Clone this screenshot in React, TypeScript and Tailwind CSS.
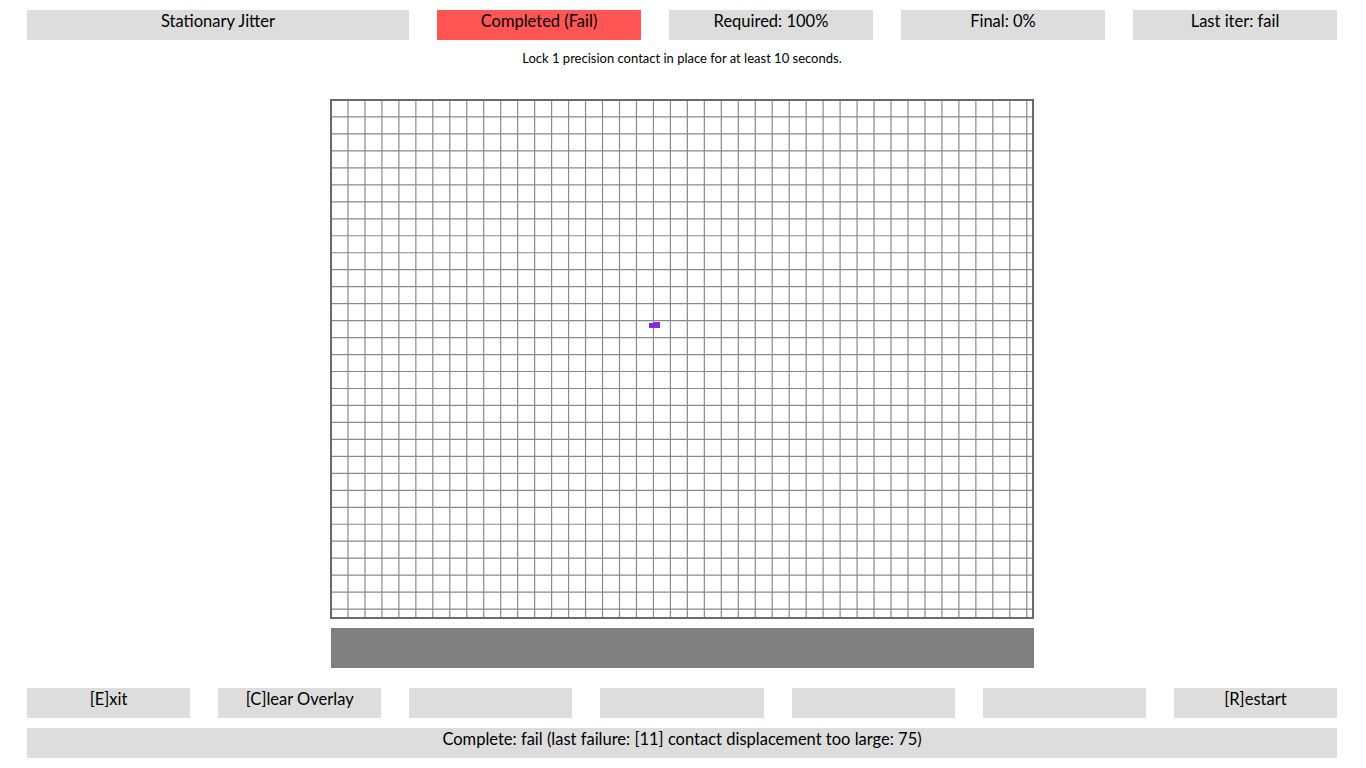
import React from 'react';

const PITCH = 16.97;
const GRID_W = 703;
const GRID_H = 519;

const Cell: React.FC<{ label?: string; className?: string }> = ({ label, className }) => (
  <div className={`h-[30px] flex justify-center bg-[#dddddd] text-[16.5px] leading-[23px] text-black ${className ?? ''}`}>
    {label}
  </div>
);

const Grid: React.FC = () => {
  const cols = Math.floor(GRID_W / PITCH);
  const rows = Math.floor(GRID_H / PITCH);
  return (
    <svg width={GRID_W + 1} height={GRID_H + 1} className="block">
      {Array.from({ length: cols + 1 }, (_, i) => (
        <line key={`v${i}`} x1={1 + i * PITCH} y1={0} x2={1 + i * PITCH} y2={GRID_H} stroke="#8a8a8a" strokeWidth={1.2} />
      ))}
      {Array.from({ length: rows + 1 }, (_, j) => (
        <line key={`h${j}`} x1={0} y1={1 + j * PITCH} x2={GRID_W} y2={1 + j * PITCH} stroke="#8a8a8a" strokeWidth={1.2} />
      ))}
      <rect x={1} y={1} width={GRID_W - 1} height={GRID_H - 1} fill="none" stroke="#6a6a6a" strokeWidth={2} />
      {/* contact marker */}
      <rect x={319} y={224} width={11} height={5} fill="#8a2be2" />
      <rect x={324} y={223} width={6} height={1} fill="#8a2be2" />
    </svg>
  );
};

export default function App() {
  return (
    <div className="w-[1366px] h-[768px] bg-white pl-[27px] pr-[29px] pt-[10px] font-['Lato','Open_Sans',sans-serif]">
      {/* header row */}
      <div className="flex gap-[28px]">
        <Cell label="Stationary Jitter" className="w-[382px]" />
        <Cell label="Completed (Fail)" className="w-[204px] !bg-[#ff5555]" />
        <Cell label="Required: 100%" className="w-[204px]" />
        <Cell label="Final: 0%" className="w-[204px]" />
        <Cell label="Last iter: fail" className="w-[204px]" />
      </div>

      <div className="mt-[10px] h-[16px] text-center text-[13px] leading-[16px] text-black">
        Lock 1 precision contact in place for at least 10 seconds.
      </div>

      <div className="mt-[33px] flex flex-col items-center">
        <Grid />
        <div className="mt-[9px] h-[40px] w-[703px] bg-[#808080]" />
      </div>

      {/* controls */}
      <div className="mt-[20px] flex gap-[28px]">
        <Cell label="[E]xit" className="flex-1" />
        <Cell label="[C]lear Overlay" className="flex-1" />
        <Cell className="flex-1" />
        <Cell className="flex-1" />
        <Cell className="flex-1" />
        <Cell className="flex-1" />
        <Cell label="[R]estart" className="flex-1" />
      </div>

      <div className="mt-[10px]">
        <Cell label="Complete: fail (last failure: [11] contact displacement too large: 75)" />
      </div>
    </div>
  );
}
